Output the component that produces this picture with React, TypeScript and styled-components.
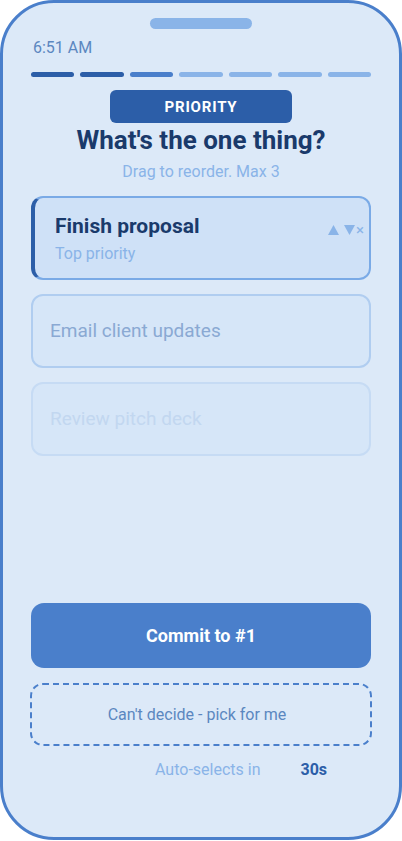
import React from 'react'
import styled, { createGlobalStyle } from 'styled-components'

const GlobalStyle = createGlobalStyle`
  html, body {
    margin: 0;
    padding: 0;
    background: #ffffff;
    font-family: Roboto, "Liberation Sans", sans-serif;
  }
`

const Phone = styled.div`
  box-sizing: border-box;
  width: 402px;
  height: 840px;
  border: 3px solid #4a7fcb;
  border-radius: 54px;
  background: #dce9f8;
  padding: 15px 28px 0 28px;
  display: flex;
  flex-direction: column;
`

const Notch = styled.div`
  align-self: center;
  width: 102px;
  height: 11px;
  border-radius: 6px;
  background: #8ab4e8;
`

const Time = styled.div`
  margin-top: 9px;
  padding-left: 2px;
  font-size: 16px;
  line-height: 20px;
  color: #5b87c0;
`

const Progress = styled.div`
  margin-top: 14px;
  display: grid;
  grid-template-columns: repeat(7, 1fr);
  gap: 6px;
`

const Segment = styled.div<{ $tone: 'done' | 'current' | 'todo' }>`
  height: 5px;
  border-radius: 3px;
  background: ${({ $tone }) =>
    $tone === 'done' ? '#2c5ea8' : $tone === 'current' ? '#4a7fcb' : '#8ab4e8'};
`

const Badge = styled.div`
  align-self: center;
  margin-top: 13px;
  width: 182px;
  height: 33px;
  border-radius: 6px;
  background: #2c5ea8;
  color: #ffffff;
  font-weight: 700;
  font-size: 15px;
  letter-spacing: 0.8px;
  display: flex;
  align-items: center;
  justify-content: center;
`

const Title = styled.h1`
  margin: 2px 0 0;
  text-align: center;
  font-size: 26px;
  line-height: 30px;
  font-weight: 700;
  color: #1a3a6b;
`

const Subtitle = styled.div`
  margin-top: 7px;
  text-align: center;
  font-size: 16px;
  line-height: 20px;
  color: #8ab4e8;
`

const List = styled.div`
  margin-top: 14px;
  display: flex;
  flex-direction: column;
  gap: 14px;
`

const Card = styled.div<{ $level: number }>`
  box-sizing: border-box;
  position: relative;
  height: ${({ $level }) => ($level === 0 ? 84 : 74)}px;
  border-radius: 12px;
  border: 2px solid
    ${({ $level }) => ($level === 0 ? '#7aaae6' : $level === 1 ? '#b0cdf0' : '#c6dbf4')};
  border-left: ${({ $level }) => ($level === 0 ? '4px solid #2c5ea8' : undefined)};
  background: ${({ $level }) => ($level === 0 ? '#cfe1f7' : '#d6e6f8')};
  padding: 0 0 0 ${({ $level }) => ($level === 0 ? 20 : 17)}px;
  display: flex;
  flex-direction: column;
  justify-content: center;
`

const CardTitle = styled.div`
  font-size: 21px;
  line-height: 26px;
  font-weight: 700;
  color: #1a3a6b;
`

const CardNote = styled.div`
  margin-top: 5px;
  font-size: 16px;
  line-height: 20px;
  color: #8ab4e8;
`

const CardText = styled.div<{ $faded?: boolean }>`
  font-size: 19px;
  line-height: 24px;
  color: ${({ $faded }) => ($faded ? '#c2d7f0' : '#8aa9d3')};
`

const Controls = styled.div`
  position: absolute;
  right: 5px;
  top: 25px;
  display: flex;
  align-items: center;
  gap: 5px;
  color: #8ab4e8;
`

const Close = styled.span`
  font-size: 15px;
  line-height: 14px;
  margin-left: -4px;
`

const Actions = styled.div`
  margin-top: auto;
  margin-bottom: 57px;
  display: flex;
  flex-direction: column;
`

const CommitButton = styled.button`
  height: 65px;
  border: none;
  border-radius: 13px;
  background: #4a7fcb;
  color: #ffffff;
  font-family: inherit;
  font-size: 18px;
  font-weight: 700;
`

const PickButton = styled.button`
  margin: 15px -1px 0;
  height: 63px;
  border: 2px dashed #4a7fcb;
  border-radius: 13px;
  background: transparent;
  color: #5b87c0;
  font-family: inherit;
  font-size: 16px;
  padding-right: 14px;
`

const Countdown = styled.div`
  margin-top: 14px;
  padding-left: 124px;
  display: flex;
  gap: 40px;
  font-size: 16px;
  line-height: 20px;
`

const CountLabel = styled.span`
  color: #8ab4e8;
`

const CountValue = styled.span`
  color: #2c5ea8;
  font-weight: 700;
`

const steps: Array<'done' | 'current' | 'todo'> = [
  'done', 'done', 'current', 'todo', 'todo', 'todo', 'todo',
]

const Triangle = ({ up }: { up?: boolean }) => (
  <svg width="11" height="10" viewBox="0 0 11 10">
    <path d={up ? 'M5.5 0 L11 10 L0 10 Z' : 'M0 0 L11 0 L5.5 10 Z'} fill="currentColor" />
  </svg>
)

export default function App() {
  return (
    <>
      <GlobalStyle />
      <Phone>
        <Notch />
        <Time>6:51 AM</Time>
        <Progress>
          {steps.map((s, i) => (
            <Segment key={i} $tone={s} />
          ))}
        </Progress>
        <Badge>PRIORITY</Badge>
        <Title>What's the one thing?</Title>
        <Subtitle>Drag to reorder. Max 3</Subtitle>
        <List>
          <Card $level={0}>
            <CardTitle>Finish proposal</CardTitle>
            <CardNote>Top priority</CardNote>
            <Controls>
              <Triangle up />
              <Triangle />
              <Close>×</Close>
            </Controls>
          </Card>
          <Card $level={1}>
            <CardText>Email client updates</CardText>
          </Card>
          <Card $level={2}>
            <CardText $faded>Review pitch deck</CardText>
          </Card>
        </List>
        <Actions>
          <CommitButton>Commit to #1</CommitButton>
          <PickButton>Can't decide - pick for me</PickButton>
          <Countdown>
            <CountLabel>Auto-selects in</CountLabel>
            <CountValue>30s</CountValue>
          </Countdown>
        </Actions>
      </Phone>
    </>
  )
}
